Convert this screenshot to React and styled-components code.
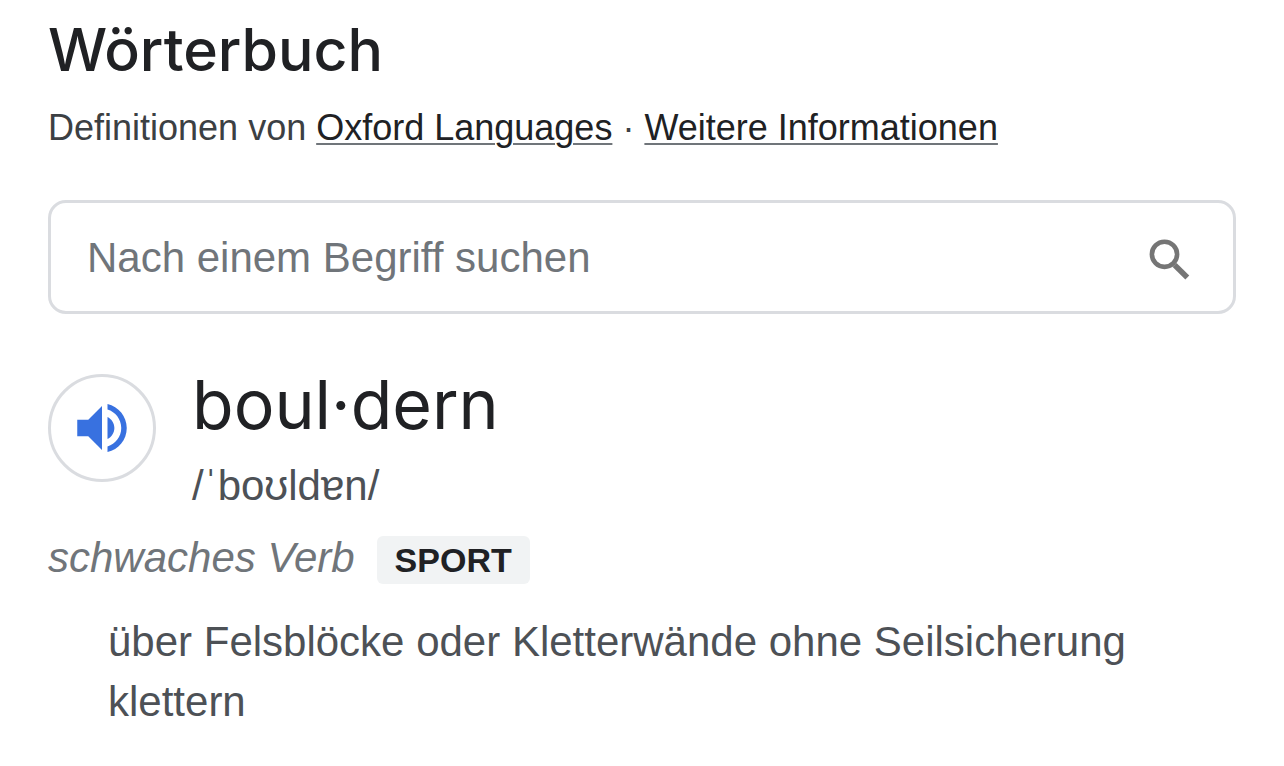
import React, { useState } from 'react';
import styled, { createGlobalStyle } from 'styled-components';

const GlobalStyle = createGlobalStyle`
    * {
        box-sizing: border-box;
    }
    body {
        margin: 0;
        background: #fff;
        color: #4d5156;
        font-family: 'Liberation Sans', Arial, sans-serif;
        font-size: 42px;
        line-height: 60px;
    }
`;

const Page = styled.main`
    padding: 16px 48px 32px;
`;

const Title = styled.h1`
    margin: 0;
    color: #202124;
    font-family: Inter, sans-serif;
    font-size: 59px;
    font-weight: 500;
    line-height: 68px;
`;

const Source = styled.p`
    margin: 20px 0 0;
    color: #3c4043;
    font-size: 36px;
    line-height: 48px;
    a {
        color: #202124;
        text-decoration: underline;
        text-decoration-color: #70757a;
        text-decoration-thickness: 2px;
        text-underline-offset: 3px;
    }
`;

const SearchForm = styled.form`
    display: flex;
    align-items: center;
    margin-top: 48px;
    padding: 24px 36px;
    border: 3px solid #dadce0;
    border-radius: 18px;
    input {
        flex: 1;
        min-width: 0;
        height: 60px;
        padding: 2px 0 0;
        border: 0;
        outline: none;
        background: none;
        color: #202124;
        font: inherit;
        &::placeholder {
            color: #70757a;
            opacity: 1;
        }
    }
    button {
        display: flex;
        padding: 0;
        border: 0;
        background: none;
        color: #757575;
        cursor: pointer;
    }
`;

const Entry = styled.section`
    display: flex;
    gap: 36px;
    margin-top: 60px;
`;

const SpeakerButton = styled.button`
    display: flex;
    flex: none;
    align-items: center;
    justify-content: center;
    width: 108px;
    height: 108px;
    padding: 0;
    border: 3px solid #dadce0;
    border-radius: 50%;
    background: #fff;
    color: #3871e0;
    cursor: pointer;
`;

const Word = styled.h2`
    margin: 0;
    color: #202124;
    font-family: Inter, sans-serif;
    font-size: 68px;
    font-weight: 400;
    line-height: 60px;
`;

const Phonetic = styled.div`
    margin-top: 22px;
`;

const WordClass = styled.div`
    display: flex;
    align-items: flex-end;
    gap: 22px;
    margin-top: 12px;
    color: #70757a;
`;

const Tag = styled.span`
    margin-bottom: 4px;
    padding: 0 18px;
    border-radius: 6px;
    background: #f1f3f4;
    color: #202124;
    font-size: 34px;
    font-weight: bold;
    line-height: 48px;
`;

const Definition = styled.p`
    margin: 24px 0 0;
    padding: 0 60px;
`;

const SearchIcon = () => (
    <svg width="60" height="60" viewBox="0 0 60 60" fill="none" stroke="currentColor" aria-hidden="true">
        <circle cx="27.5" cy="27.3" r="12.6" strokeWidth="4.6" />
        <path d="M37.6 38 50.3 50.4" strokeWidth="5.6" />
    </svg>
);

const SpeakerIcon = () => (
    <svg width="66" height="66" viewBox="0 0 24 24" fill="currentColor" aria-hidden="true">
        <path d="M3 9v6h4l5 5V4L7 9H3zm13.5 3c0-1.77-1.02-3.29-2.5-4.03v8.05c1.48-.73 2.5-2.25 2.5-4.02zM14 3.23v2.06c2.89.86 5 3.54 5 6.71s-2.11 5.85-5 6.71v2.06c4.01-.91 7-4.49 7-8.77s-2.99-7.86-7-8.77z" />
    </svg>
);

const Search = () => {
    const [term, setTerm] = useState('');

    return (
        <SearchForm onSubmit={(e) => e.preventDefault()}>
            <input
                type="text"
                aria-label="Nach einem Begriff suchen"
                placeholder="Nach einem Begriff suchen"
                value={term}
                onChange={(e) => setTerm(e.target.value)}
            />
            <button type="submit" aria-label="Suchen">
                <SearchIcon />
            </button>
        </SearchForm>
    );
};

const App = () => (
    <>
        <GlobalStyle />
        <Page>
            <Title>Wörterbuch</Title>
            <Source>
                Definitionen von <a href="#oxford">Oxford Languages</a> · <a href="#info">Weitere Informationen</a>
            </Source>
            <Search />
            <Entry>
                <SpeakerButton type="button" aria-label="Aussprache anhören">
                    <SpeakerIcon />
                </SpeakerButton>
                <div>
                    <Word>boul·dern</Word>
                    <Phonetic>/ˈboʊldɐn/</Phonetic>
                </div>
            </Entry>
            <WordClass>
                <em>schwaches Verb</em>
                <Tag>SPORT</Tag>
            </WordClass>
            <Definition>über Felsblöcke oder Kletterwände ohne Seilsicherung klettern</Definition>
        </Page>
    </>
);

export default App;
